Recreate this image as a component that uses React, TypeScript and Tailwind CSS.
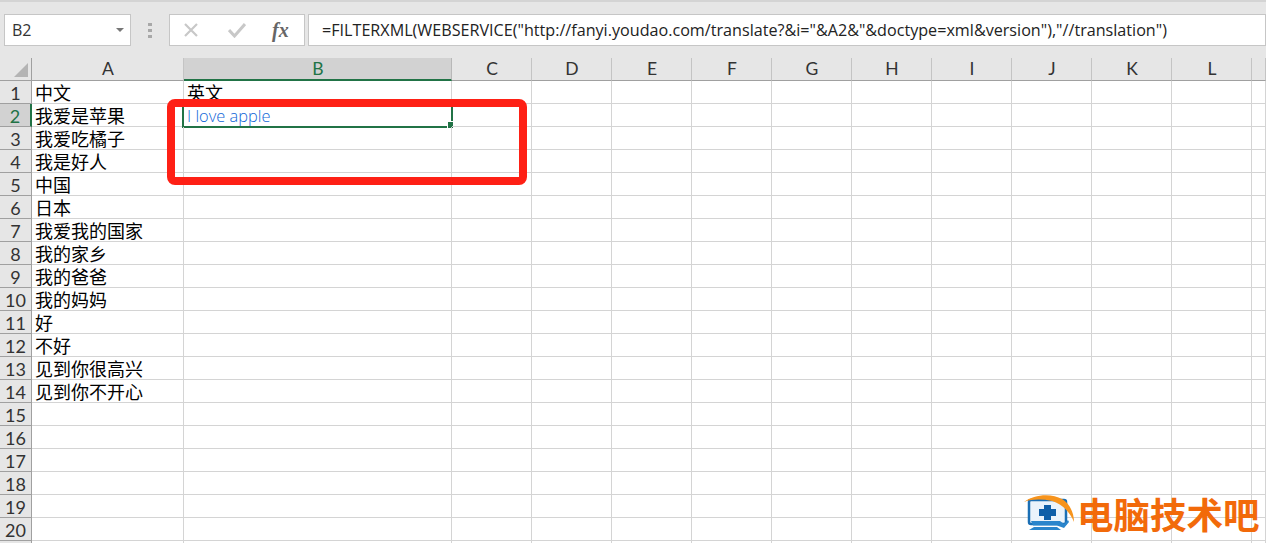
import React from 'react';

const COLUMNS = ['A', 'B', 'C', 'D', 'E', 'F', 'G', 'H', 'I', 'J', 'K', 'L', ''];

const COL_A: string[] = [
  '中文', '我爱是苹果', '我爱吃橘子', '我是好人', '中国', '日本', '我爱我的国家', '我的家乡',
  '我的爸爸', '我的妈妈', '好', '不好', '见到你很高兴', '见到你不开心',
];

const ROW_COUNT = 21;
const GRID = 'grid grid-rows-[23px] grid-cols-[32px_152px_268px_80px_80px_80px_80px_80px_80px_80px_80px_80px_80px_14px]';
const CJK = { fontFamily: '"Noto Sans CJK SC", sans-serif' };

const Logo = () => (
  <div className="absolute left-[1024px] top-[494px] flex items-center">
    <svg width="52" height="40" viewBox="0 0 52 40">
      <rect x="5" y="6" width="37" height="24" rx="2" fill="#eaf3fb" stroke="#1b6fb5" strokeWidth="2.5" />
      <path d="M7 27 H36 L40 30 L44 26 L45 28 L40 34 L33 31.5 H9 Z" fill="#2a85cc" />
      <path d="M5 36 H37 L33 33 H10 Z" fill="#2a85cc" />
      <path d="M20 11 H27 V15 H32 V22 H27 V26 H20 V22 H15 V15 H20 Z" fill="#0f5fa8" />
      <path d="M0 8 C10 0 28 -1 38 5 C45 9 50 18 50 28 C46 18 38 10 28 7 C18 5 8 5 0 8 Z" fill="#f7941d" />
    </svg>
    <span className="ml-[3px] -translate-x-[2px] text-[36.5px] leading-[40px] font-bold text-[#f26a0a] whitespace-nowrap" style={CJK}>
      电脑技术吧
    </span>
  </div>
);

export default function App() {
  return (
    <div className="relative h-[543px] w-[1266px] overflow-hidden bg-white" style={{ fontFamily: '"Lato", sans-serif' }}>
      {/* formula bar */}
      <div className="h-[58px] border-t-2 border-[#d4d4d4] bg-[#e6e6e6] pt-[12px] pl-[4px] flex items-start">
        <div className="flex h-[32px] w-[127px] items-center justify-between border border-[#c6c6c6] bg-white pl-[7px] pr-[6px] text-[16px] text-[#333]" style={{ fontFamily: '"Open Sans", sans-serif' }}>
          <span>B2</span>
          <span className="h-0 w-0 border-x-[4px] border-t-[4px] border-x-transparent border-t-[#777]" />
        </div>
        <div className="ml-[17px] mt-[9px] flex w-[4px] flex-col gap-[3px]">
          <span className="h-[3px] w-[4px] bg-[#a8a8a8]" />
          <span className="h-[3px] w-[4px] bg-[#a8a8a8]" />
          <span className="h-[3px] w-[4px] bg-[#a8a8a8]" />
        </div>
        <div className="ml-[17px] flex h-[32px] w-[136px] items-center border border-[#c6c6c6] bg-white">
          <svg width="16" height="16" viewBox="0 0 16 16" className="ml-[13px]">
            <path d="M2 2 L14 14 M14 2 L2 14" stroke="#c8c8c8" strokeWidth="2.2" />
          </svg>
          <svg width="18" height="16" viewBox="0 0 18 16" className="ml-[29px]">
            <path d="M1 8 L6.5 14 L17 2" fill="none" stroke="#c8c8c8" strokeWidth="3" />
          </svg>
          <span className="ml-[26px] text-[20px] font-bold italic leading-none text-[#666]" style={{ fontFamily: '"Liberation Serif", serif' }}>
            fx
          </span>
        </div>
        <div className="ml-[3px] flex h-[32px] flex-1 items-center border border-[#c6c6c6] bg-white pl-[13px] text-[16.15px] whitespace-nowrap text-[#222]" style={{ fontFamily: '"Open Sans", sans-serif' }}>
          =FILTERXML(WEBSERVICE("http://fanyi.youdao.com/translate?&i="&A2&"&doctype=xml&version"),"//translation")
        </div>
      </div>

      {/* column headers */}
      <div className={`${GRID} bg-[#e6e6e6]`}>
        <div className="relative border-r border-b border-[#a0a0a0]">
          <span className="absolute bottom-[3px] right-[3px] h-0 w-0 border-b-[14px] border-l-[14px] border-b-[#b4b4b4] border-l-transparent" />
        </div>
        {COLUMNS.map((col, i) => (
          <div
            key={i}
            className={
              col === 'B'
                ? 'flex items-center justify-center border-r border-b-2 border-r-[#b8b8b8] border-b-[#217346] bg-[#d2d2d2] pl-[1px] text-[17.5px] leading-none text-[#217346]'
                : 'flex items-center justify-center border-r border-b border-r-[#c4c4c4] border-b-[#a0a0a0] pl-[1px] text-[17.5px] leading-none text-[#333]'
            }
          >
            {col}
          </div>
        ))}
      </div>

      {/* rows */}
      {Array.from({ length: ROW_COUNT }, (_, r) => {
        const num = r + 1;
        const active = num === 2;
        return (
          <div key={num} className={GRID}>
            <div
              className={
                active
                  ? 'flex items-center justify-center border-r-2 border-b border-r-[#217346] border-b-[#a0a0a0] bg-[#d2d2d2] pt-[2px] text-[18px] leading-none text-[#217346]'
                  : 'flex items-center justify-center border-r border-b border-[#a0a0a0] bg-[#e6e6e6] pt-[2px] text-[18px] leading-none text-[#333]'
              }
            >
              {num <= 20 ? num : ''}
            </div>
            {COLUMNS.map((col, c) => (
              <div
                key={c}
                className="relative flex items-center border-r border-b border-[#d4d4d4] pl-[3px] text-[18px] leading-none whitespace-nowrap text-black"
                style={CJK}
              >
                {col === 'A' && COL_A[r]}
                {col === 'B' && num === 1 && '英文'}
                {col === 'B' && active && (
                  <>
                    <span className="pt-[2px] text-[16.4px] font-light text-[#0f66d8]" style={{ fontFamily: '"Open Sans", sans-serif' }}>I love apple</span>
                    <span className="absolute -left-[2px] -top-[1px] h-[25px] w-[271px] border-2 border-[#217346]" />
                    <span className="absolute -right-[2px] -bottom-[2px] h-[6px] w-[5px] bg-[#217346] outline outline-white" />
                  </>
                )}
              </div>
            ))}
          </div>
        );
      })}

      {/* red annotation */}
      <div className="absolute left-[167px] top-[99px] h-[86px] w-[360px] rounded-[8px] border-[8px] border-[#fe2015]" />
      <Logo />
    </div>
  );
}
